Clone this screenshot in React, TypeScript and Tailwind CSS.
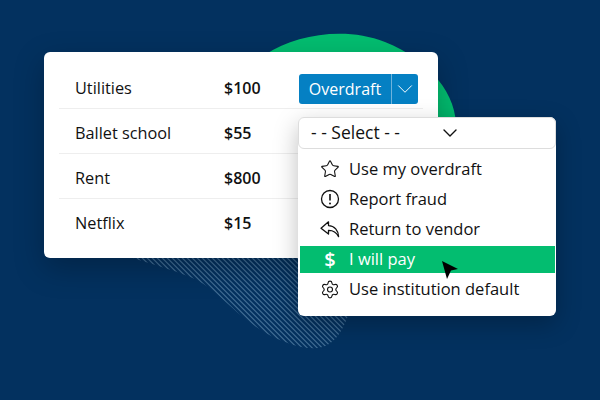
import { ChevronDown, Star, Settings } from 'lucide-react';

const rows = [
  { name: 'Utilities', amount: '$100' },
  { name: 'Ballet school', amount: '$55' },
  { name: 'Rent', amount: '$800' },
  { name: 'Netflix', amount: '$15' },
];

function AlertIcon() {
  return (
    <svg width="20" height="20" viewBox="0 0 20 20" fill="none" stroke="currentColor" strokeWidth="1.3">
      <circle cx="10" cy="10" r="8.5" />
      <path d="M10 5v6.5" strokeWidth="1.6" />
      <circle cx="10" cy="14.5" r="1" fill="currentColor" stroke="none" />
    </svg>
  );
}

function ReplyIcon() {
  return (
    <svg width="20" height="20" viewBox="0 0 20 20" fill="none" stroke="currentColor" strokeWidth="1.3" strokeLinejoin="round">
      <path d="M8.5 2.8L1 9.2L8.5 15V11.3C12.5 11.2 16 12.6 18.6 17.6C18.4 11.5 14.5 6.8 8.5 6.6Z" />
    </svg>
  );
}

const items = [
  { label: 'Use my overdraft', icon: <Star size={20} strokeWidth={1.3} /> },
  { label: 'Report fraud', icon: <AlertIcon /> },
  { label: 'Return to vendor', icon: <ReplyIcon /> },
  { label: 'I will pay', icon: <span className="text-[20px] font-semibold leading-none">$</span>, active: true },
  { label: 'Use institution default', icon: <Settings size={21} strokeWidth={1.35} /> },
];

export default function App() {
  return (
    <div className="relative w-[600px] h-[400px] overflow-hidden bg-[#03315f] pt-[52px] pl-[44px] font-['Open_Sans',sans-serif]">
      {/* background blobs */}
      <svg className="absolute left-0 top-0" width="600" height="400" viewBox="0 0 600 400">
        <defs>
          <pattern id="hatch" width="3.5355" height="3.5355" patternUnits="userSpaceOnUse" patternTransform="rotate(45)">
            <rect width="3.5355" height="1" fill="#4f7a9f" />
          </pattern>
        </defs>
        <path d="M266 54C295 35 345 26 385 42C430 60 458 95 456 130C454 170 430 200 400 230L300 230Z" fill="#03bd70" />
        <path d="M120 250L133 258C155 265 180 272 197 280C215 290 228 305 243 317C255 327 268 335 280 340C295 346 305 349 318 348C332 346 342 335 350 310L370 250Z" fill="url(#hatch)" />
      </svg>

      <div className="relative w-[394px] h-[206px] rounded-md bg-white px-[15px] py-[12px] shadow-[0_10px_30px_rgba(0,0,0,0.25)]">
        {rows.map((row, i) => (
          <div key={row.name} className={`flex h-[45px] items-center px-[16px] pt-[3px] text-[#111111] ${i < 3 ? 'border-b border-[#eeeeee]' : ''}`}>
            <span className="w-[149px] text-[16.3px] leading-[24px]">{row.name}</span>
            <span className="text-[16px] font-semibold leading-[24px]">{row.amount}</span>
          </div>
        ))}

        <div className="absolute left-[255px] top-[22px] flex h-[30px] w-[119px] rounded-[3px] bg-[#0580c3] text-white">
          <span className="flex w-[93px] items-center justify-center border-r border-[#6fb3dc] text-[16px]">Overdraft</span>
          <span className="flex flex-1 items-center justify-center">
            <ChevronDown size={26} strokeWidth={0.9} />
          </span>
        </div>

        <div className="absolute left-[254px] top-[65px] w-[258px] rounded-md bg-white text-[16.5px] text-[#111111] shadow-[0_8px_24px_rgba(0,0,0,0.25)]">
          <div className="flex h-[32px] items-center rounded-md border border-[#dddddd] pb-[2px] pl-[12px]">
            <span className="w-[127px] text-[17.5px]">- - Select - -</span>
            <ChevronDown size={24} strokeWidth={1.4} className="mt-[2px]" />
          </div>
          <div className="pb-[12px] pt-[5px]">
            {items.map((item) => (
              <div key={item.label} className="flex h-[30px] items-center">
                <div className={`flex h-[27px] flex-1 items-center ${item.active ? 'ml-[2px] mr-[1px] mt-[1px] bg-[#03bd70] text-white' : ''}`}>
                  <span className={`flex w-[20px] items-center justify-center ${item.active ? 'ml-[20px]' : 'ml-[22px]'}`}>{item.icon}</span>
                  <span className="ml-[9px]">{item.label}</span>
                </div>
              </div>
            ))}
          </div>
        </div>

        {/* cursor */}
        <svg className="absolute left-[396px] top-[207px]" width="22" height="22" viewBox="0 0 22 22">
          <path d="M2 2L18 10L11 11.5L7 20Z" fill="#000" />
        </svg>
      </div>
    </div>
  );
}
